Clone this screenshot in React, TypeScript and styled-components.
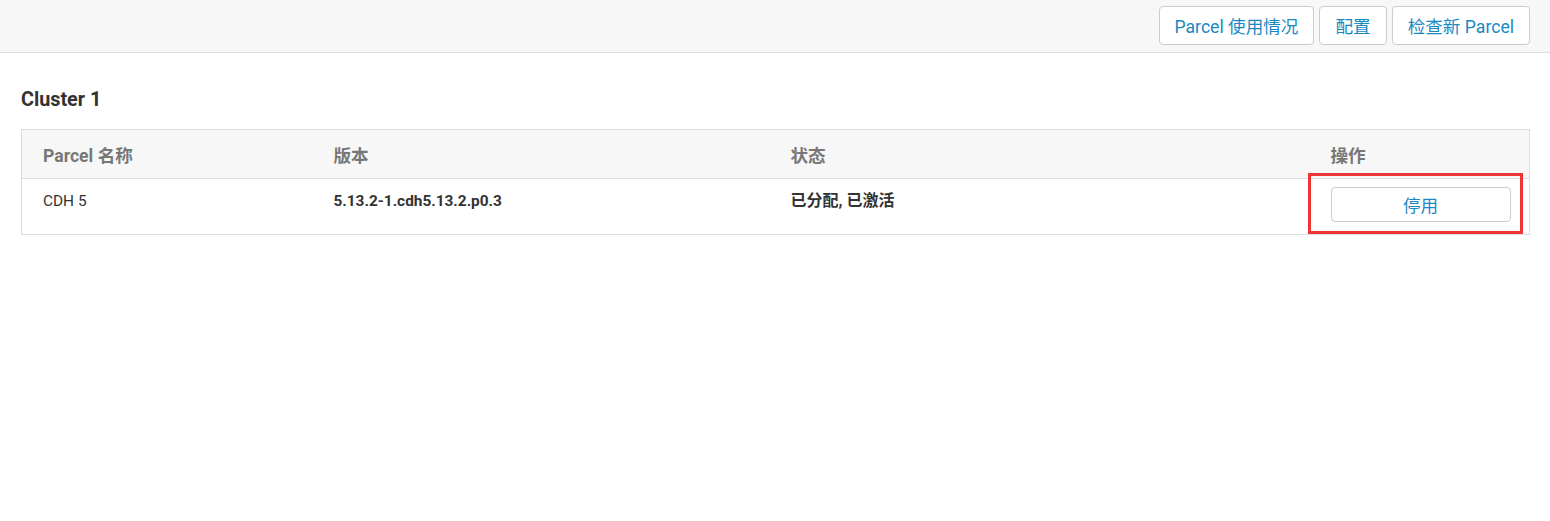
import React from "react";
import styled, { createGlobalStyle } from "styled-components";

const Global = createGlobalStyle`
  html, body { margin: 0; padding: 0; background: #fff; }
  body { font-family: Roboto, "Noto Sans CJK SC", "Liberation Sans", sans-serif; color: #333; }
  * { box-sizing: border-box; }
`;

const TopBar = styled.div`
  height: 53px;
  background: #f7f7f7;
  border-bottom: 1px solid #ddd;
  display: flex;
  justify-content: flex-end;
  align-items: flex-start;
  padding: 6px 20px 0 0;
  gap: 5px;
`;

const BarButton = styled.button`
  height: 39px;
  padding: 0 15px;
  background: #fff;
  border: 1px solid #ccc;
  border-radius: 4px;
  color: #1a88c2;
  font-family: Roboto, "Noto Sans CJK SC", sans-serif;
  font-size: 17.6px;
  cursor: pointer;
`;

const Content = styled.div`
  padding: 35px 20px 0 21px;
`;

const Title = styled.h3`
  margin: 0 0 17px;
  font-size: 19.8px;
  line-height: 24px;
  font-weight: 700;
  color: #333;
`;

const Table = styled.table`
  width: 1509px;
  border-collapse: collapse;
  table-layout: fixed;
  border: 1px solid #ddd;
`;

const HeadCell = styled.th`
  height: 49px;
  background: #f7f7f7;
  text-align: left;
  padding: 0 21px;
  font-size: 17.6px;
  font-weight: 700;
  color: #777;
  border-bottom: 1px solid #ddd;
`;

const Cell = styled.td<{ $bold?: boolean; $size?: number }>`
  vertical-align: top;
  padding: 8px 21px 12px;
  font-size: ${(p) => p.$size ?? 15.4}px;
  line-height: 28px;
  font-weight: ${(p) => (p.$bold ? 700 : 400)};
  color: #333;
`;

const ActionCell = styled(Cell)`
  position: relative;
`;

const RowButton = styled.button`
  display: block;
  width: 180px;
  height: 35px;
  background: #fff;
  border: 1px solid #ccc;
  border-radius: 4px;
  color: #1a88c2;
  font-family: Roboto, "Noto Sans CJK SC", sans-serif;
  font-size: 17.6px;
  cursor: pointer;
`;

const Highlight = styled.div`
  position: absolute;
  left: -2px;
  top: -6px;
  width: 215px;
  height: 61px;
  border: 3px solid #ee3535;
  pointer-events: none;
`;

export default function App() {
  return (
    <>
      <Global />
      <TopBar>
        <BarButton>Parcel 使用情况</BarButton>
        <BarButton>配置</BarButton>
        <BarButton>检查新 Parcel</BarButton>
      </TopBar>
      <Content>
        <Title>Cluster 1</Title>
        <Table>
          <colgroup>
            <col style={{ width: 291 }} />
            <col style={{ width: 457 }} />
            <col style={{ width: 540 }} />
            <col />
          </colgroup>
          <thead>
            <tr>
              <HeadCell>Parcel 名称</HeadCell>
              <HeadCell>版本</HeadCell>
              <HeadCell>状态</HeadCell>
              <HeadCell>操作</HeadCell>
            </tr>
          </thead>
          <tbody>
            <tr>
              <Cell>CDH 5</Cell>
              <Cell $bold>5.13.2-1.cdh5.13.2.p0.3</Cell>
              <Cell $bold $size={16}>已分配, 已激活</Cell>
              <ActionCell>
                <RowButton>停用</RowButton>
                <Highlight />
              </ActionCell>
            </tr>
          </tbody>
        </Table>
      </Content>
    </>
  );
}
